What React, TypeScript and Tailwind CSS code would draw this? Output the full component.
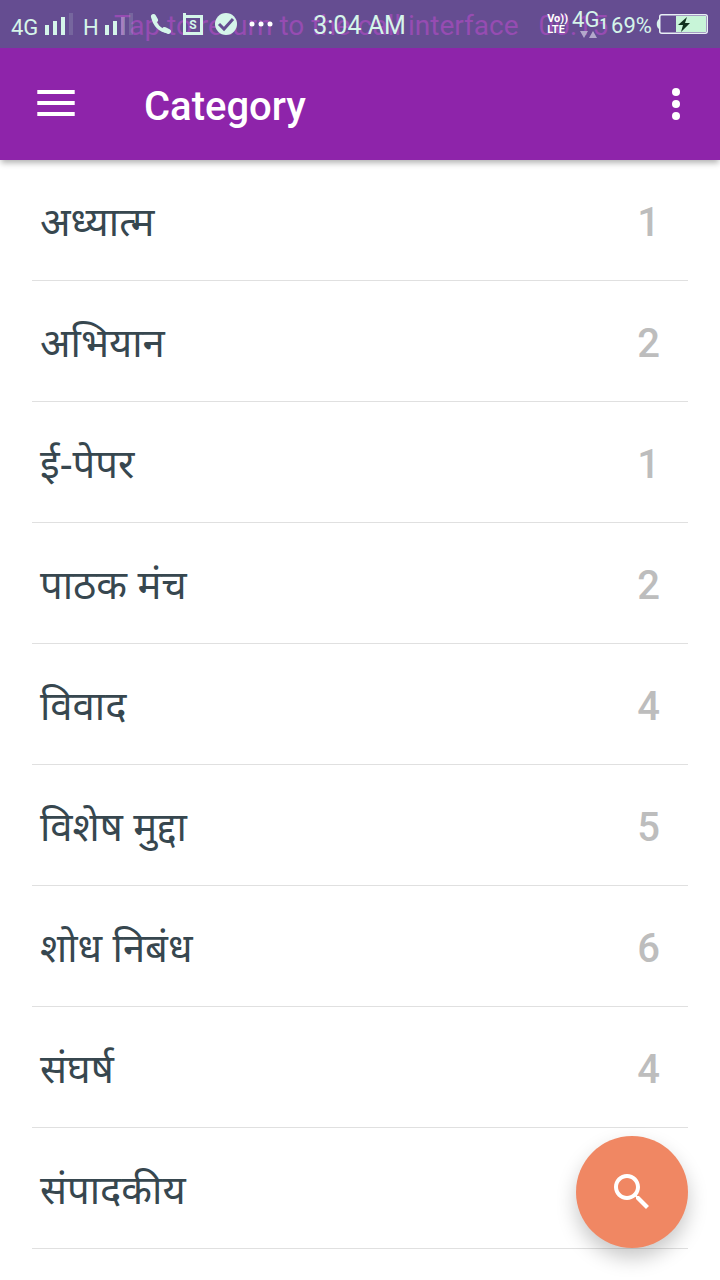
const categories = [
  { name: "अध्यात्म", count: 1 },
  { name: "अभियान", count: 2 },
  { name: "ई-पेपर", count: 1 },
  { name: "पाठक मंच", count: 2 },
  { name: "विवाद", count: 4 },
  { name: "विशेष मुद्दा", count: 5 },
  { name: "शोध निबंध", count: 6 },
  { name: "संघर्ष", count: 4 },
  { name: "संपादकीय", count: null },
];

const Signal = ({ level }: { level: number }) => (
  <svg width="28" height="22" viewBox="0 0 28 22" fill="#d5f5ea">
    <rect x="0" y="12" width="4" height="10" />
    <rect x="8" y="8" width="4" height="14" />
    <rect x="16" y="4" width="4" height="18" fillOpacity={level > 2 ? 1 : 0.3} />
    <rect x="24" y="0" width="4" height="22" fillOpacity="0.15" />
  </svg>
);

const StatusBar = () => {
  return (
    <div className="relative flex h-12 items-center bg-[#654d91] pl-[11px] pr-3 text-[22px] leading-6 text-[#d5f5ea]">
      <div className="absolute inset-0 flex items-center gap-5 whitespace-nowrap pl-[114px] pt-1 text-[28px] leading-8 text-[#964cb2]">
        <span>Tap to return to the call interface</span>
        <span>00:15</span>
      </div>
      <div className="relative flex flex-1 items-center">
        <span className="w-[34px] pt-2">4G</span>
        <Signal level={3} />
        <span className="ml-[10px] w-[22px] pt-2">H</span>
        <Signal level={2} />
        <svg className="ml-[17px]" width="22" height="22" viewBox="0 0 22 22">
          <path d="M3 4C4 11 10 18 18 18.500" fill="none" stroke="#d5f5ea" strokeWidth="3.500" />
          <path
            d="M3.500 3.500L5.500 7M14.500 16.500L18.500 18.500"
            fill="none"
            stroke="#d5f5ea"
            strokeWidth="5"
            strokeLinecap="round"
          />
        </svg>
        <svg className="ml-[11px]" width="20" height="22" viewBox="0 0 20 22">
          <path d="M1.5 0v3.5h17v17h-17V2" fill="none" stroke="#d5f5ea" strokeWidth="3" />
          <text x="10" y="16" textAnchor="middle" fontSize="12" fontWeight="700" fill="#d5f5ea">
            S
          </text>
        </svg>
        <svg className="ml-3" width="22" height="22" viewBox="0 0 22 22">
          <circle cx="11" cy="11" r="11" fill="#d5f5ea" />
          <path d="M4 11l5 5 9-10" fill="none" stroke="#654d91" strokeWidth="3" />
        </svg>
        <svg className="ml-3" width="24" height="6" viewBox="0 0 24 6" fill="#fff">
          <circle cx="3" cy="3" r="2.5" />
          <circle cx="12" cy="3" r="2.5" />
          <circle cx="21" cy="3" r="2.5" />
        </svg>
      </div>
      <span className="relative pt-1 text-[25px]">3:04 AM</span>
      <div className="relative flex flex-1 items-center justify-end">
        <div className="flex flex-col text-[11px] font-bold leading-[11px] text-white">
          <span>Vo))</span>
          <span>LTE</span>
        </div>
        <div className="relative ml-1 flex w-[39px] items-end pb-2 leading-6">
          <span>4G</span>
          <span className="text-sm font-bold leading-4">1</span>
          <svg className="absolute left-2 top-[22px]" width="18" height="9" viewBox="0 0 18 9" fill="#b3a9cb">
            <path d="M0 1h8L4 8zM9 8h8l-4-7z" />
          </svg>
        </div>
        <span className="w-[45px] pt-1">69%</span>
        <svg width="52" height="20" viewBox="0 0 52 20">
          <path d="M3 5c-3 2-3 8 0 10z" fill="#d5f5ea" />
          <rect x="3.75" y="0.75" width="47.5" height="18.5" rx="2" fill="none" stroke="#e8f0f5" strokeWidth="1.5" />
          <path d="M20 2h30v16H20z" fill="#c8f5d8" />
          <path d="M31 3L22 11h5l-2 7 9-9h-5z" fill="#12331f" />
        </svg>
      </div>
    </div>
  );
};

const AppBar = () => {
  return (
    <header className="flex h-28 items-center bg-[#8e24aa] pl-9 pr-8 text-white shadow-[0_4px_6px_-1px_rgba(0,0,0,0.3)]">
      <button aria-label="Open menu" className="flex h-12 w-10 items-center">
        <svg width="40" height="48" viewBox="0 0 40 48" fill="currentColor">
          <path d="M1.3 10h37.4v4H1.3zM1.3 21h37.4v4H1.3zM1.3 32h37.4v4H1.3z" />
        </svg>
      </button>
      <h1 className="ml-[68px] flex-1 pt-1.5 text-[40px] font-medium leading-[48px]">Category</h1>
      <button aria-label="More options" className="flex h-12 w-6 items-center justify-center">
        <svg width="8" height="32" viewBox="0 0 8 32" fill="currentColor">
          <circle cx="4" cy="4" r="4" />
          <circle cx="4" cy="16" r="4" />
          <circle cx="4" cy="28" r="4" />
        </svg>
      </button>
    </header>
  );
};

const App = () => {
  return (
    <div className="min-h-screen bg-white font-['Roboto','Noto_Sans',sans-serif]">
      <StatusBar />
      <AppBar />
      <ul className="px-8">
        {categories.map((category) => (
          <li key={category.name} className="border-b border-[#e0e0e0]">
            <a href="#" className="flex h-[120px] items-center justify-between pl-2 pr-7 pt-1.5 text-[40px] leading-[60px] text-[#37474f]">
              <span className="pb-1 font-['Noto_Sans','Noto_Sans_Devanagari',sans-serif]">{category.name}</span>
              <span className="font-medium text-[#bdbdbd]">{category.count}</span>
            </a>
          </li>
        ))}
      </ul>
      <button
        aria-label="Search"
        className="fixed bottom-8 right-8 flex size-28 items-center justify-center rounded-full bg-[#f08763] text-white shadow-[0_10px_20px_rgba(0,0,0,0.22)]"
      >
        <svg width="48" height="48" viewBox="0 0 24 24" fill="currentColor">
          <path d="M15.5 14h-.79l-.28-.27C15.41 12.59 16 11.11 16 9.5 16 5.91 13.09 3 9.5 3S3 5.91 3 9.5 5.91 16 9.5 16c1.61 0 3.09-.59 4.23-1.57l.27.28v.79l5 4.99L20.49 19l-4.99-5zm-6 0C7.01 14 5 11.99 5 9.5S7.01 5 9.5 5 14 7.01 14 9.5 11.99 14 9.5 14z" />
        </svg>
      </button>
    </div>
  );
};

export default App;
